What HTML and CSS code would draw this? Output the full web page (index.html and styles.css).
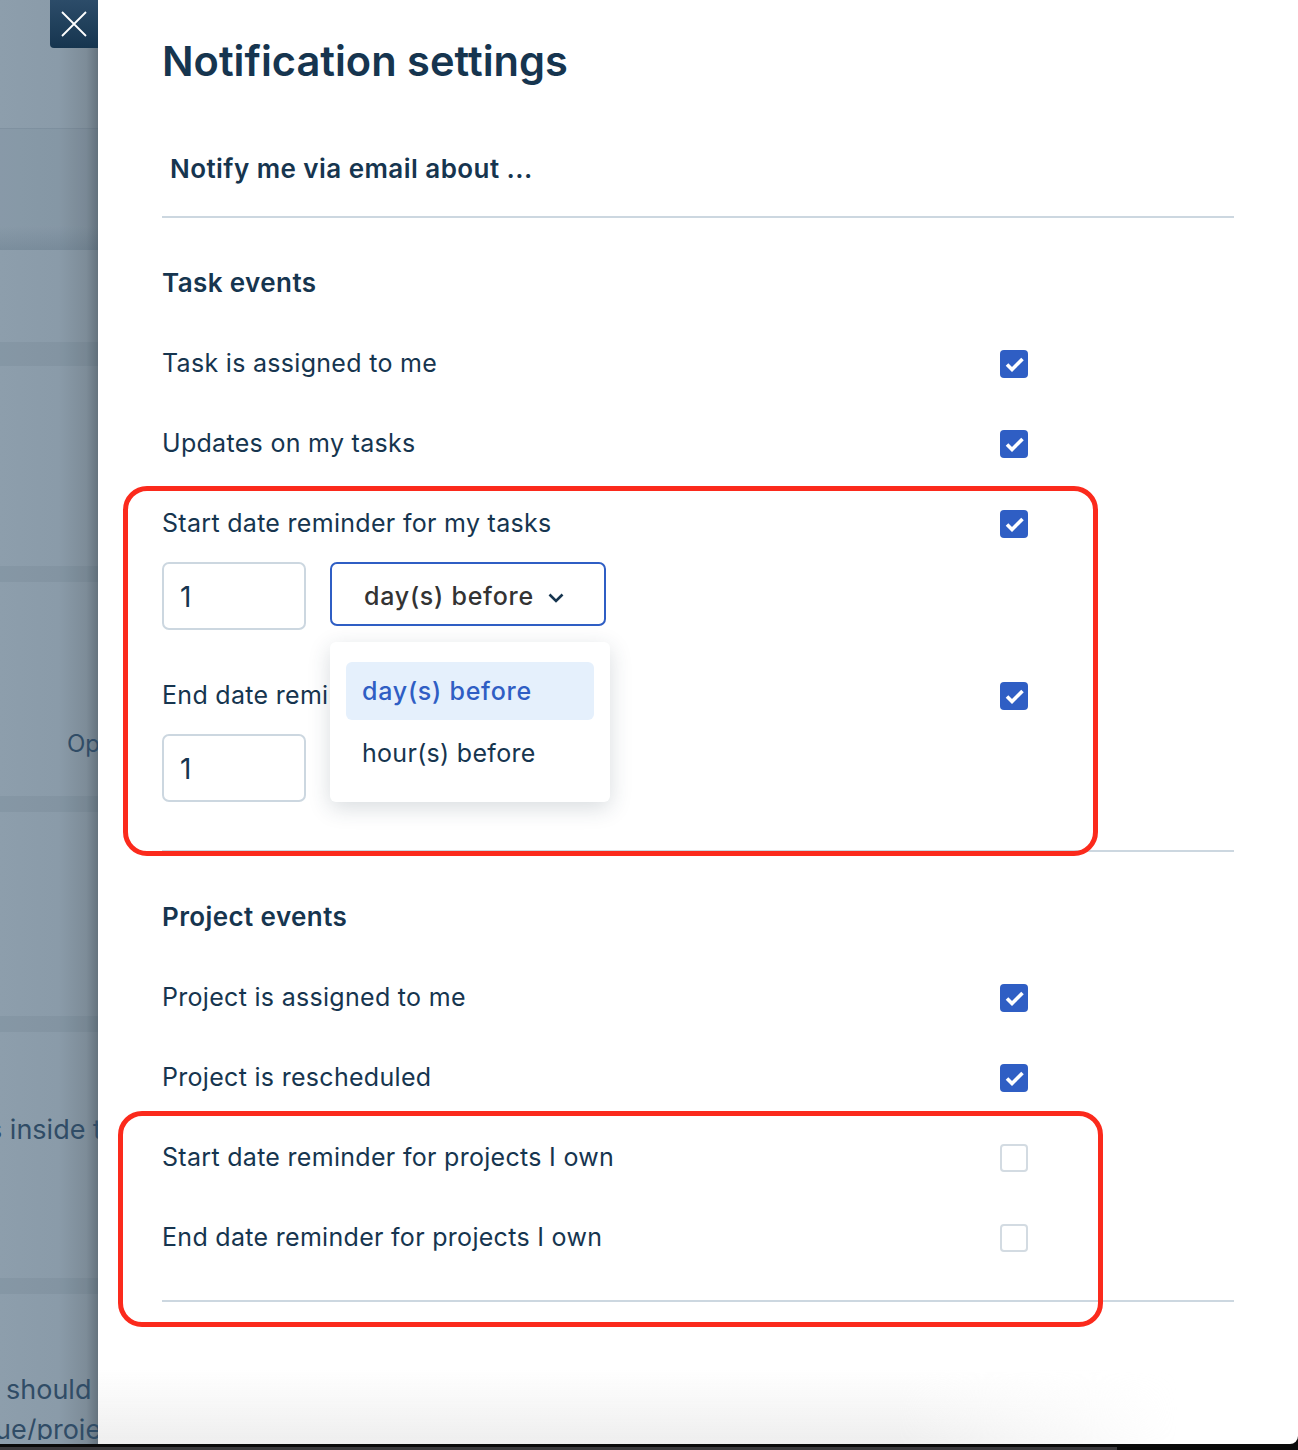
FILE: index.html
```html
<!DOCTYPE html>
<html lang="en">
<head>
<meta charset="utf-8">
<title>Notification settings</title>
<link rel="stylesheet" href="styles.css">
</head>
<body>
<div class="screen">
  <aside class="backdrop">
    <div class="bg-block h128"></div>
    <div class="bg-block h98 ruled"></div>
    <div class="band soft"></div>
    <div class="bg-block h92"></div>
    <div class="band wide"></div>
    <div class="bg-block h200"></div>
    <div class="band"></div>
    <div class="bg-block h214"><span class="bg-text op">Op</span></div>
    <div class="band"></div>
    <div class="bg-block h204"></div>
    <div class="band"></div>
    <div class="bg-block h246"><span class="bg-text inside">s inside the</span></div>
    <div class="band"></div>
    <div class="bg-block fill">
      <span class="bg-text should">should</span>
      <span class="bg-text proje">ue/project</span>
    </div>
  </aside>
  <main class="panel">
    <h1 class="title">Notification settings</h1>
    <div class="notify">Notify me via email about ...</div>
    <hr class="rule">
    <section class="group">
      <h2 class="group-title">Task events</h2>
      <div class="row"><span>Task is assigned to me</span><span class="check on"><svg viewBox="0 0 28 28"><path d="M7 14.5l5 5L22.5 9"/></svg></span></div>
      <div class="row"><span>Updates on my tasks</span><span class="check on"><svg viewBox="0 0 28 28"><path d="M7 14.5l5 5L22.5 9"/></svg></span></div>
      <div class="row"><span>Start date reminder for my tasks</span><span class="check on"><svg viewBox="0 0 28 28"><path d="M7 14.5l5 5L22.5 9"/></svg></span></div>
      <div class="controls">
        <div class="num">1</div>
        <div class="select-wrap">
          <div class="select">day(s) before<svg class="chev" viewBox="0 0 16 10"><path d="M1.5 1.5l6.5 6.5 6.5-6.5"/></svg></div>
          <div class="menu">
            <div class="opt active">day(s) before</div>
            <div class="opt">hour(s) before</div>
          </div>
        </div>
      </div>
      <div class="row after-controls"><span>End date reminder for my tasks</span><span class="check on"><svg viewBox="0 0 28 28"><path d="M7 14.5l5 5L22.5 9"/></svg></span></div>
      <div class="controls last"><div class="num">1</div></div>
    </section>
    <hr class="rule">
    <section class="group">
      <h2 class="group-title">Project events</h2>
      <div class="row"><span>Project is assigned to me</span><span class="check on"><svg viewBox="0 0 28 28"><path d="M7 14.5l5 5L22.5 9"/></svg></span></div>
      <div class="row"><span>Project is rescheduled</span><span class="check on"><svg viewBox="0 0 28 28"><path d="M7 14.5l5 5L22.5 9"/></svg></span></div>
      <div class="row"><span>Start date reminder for projects I own</span><span class="check"></span></div>
      <div class="row"><span>End date reminder for projects I own</span><span class="check"></span></div>
    </section>
    <hr class="rule tail">
    <div class="fade"></div>
  </main>
  <button class="close" type="button" aria-label="Close"><svg viewBox="0 0 26 26"><path d="M1 1l24 24M25 1L1 25"/></svg></button>
  <div class="mark mark-a"></div>
  <div class="mark mark-b"></div>
</div>
</body>
</html>
```
FILE: styles.css
```css
* { box-sizing: border-box; }
html, body { margin: 0; padding: 0; background: #0a0a0a; }
body { font-family: Inter, "Noto Sans", sans-serif; color: #16354f; }
.screen { position: relative; display: flex; width: 1298px; height: 1450px; overflow: hidden; background: linear-gradient(#3a393c, #3a393c) no-repeat 0 1447px / 1117px 3px, #0a0a0a; }

.backdrop { width: 98px; height: 1444px; flex: none; display: flex; flex-direction: column; overflow: hidden; background: linear-gradient(90deg, #8d9eac 0, #8a9ba9 60%, #7d8c98 88%, #65737e 100%); }
.bg-block { flex: none; display: flex; white-space: nowrap; }
.h128 { height: 128px; }
.h98 { height: 98px; border-top: 1px solid rgba(60,80,100,.1); background: rgba(50,75,95,.05); }
.h92 { height: 92px; }
.h200 { height: 200px; }
.h214 { height: 214px; }
.h204 { height: 204px; }
.h246 { height: 246px; }
.fill { height: 146px; flex-direction: column; overflow: hidden; }
.band { height: 16px; flex: none; background: rgba(50,75,95,.08); }
.band.wide { height: 24px; }
.band.soft { height: 24px; background: linear-gradient(rgba(50,75,95,.05), rgba(50,75,95,.2)); }
.bg-text { font-size: 27px; line-height: 40px; color: #304c66; }
.op { font-size: 24px; margin: 142px 0 0 67px; }
.inside { margin: 78px 0 0 -12px; }
.should { margin: 76px 0 0 6px; }
.proje { margin: 0 0 0 -5px; }

.panel { position: relative; flex: none; width: 1200px; height: 1444px; padding: 0 64px; background: #fff; border-radius: 0 0 8px 0; display: flex; flex-direction: column; overflow: hidden; }
.title { margin: 34px 0 0; font-size: 41.6px; line-height: 54px; font-weight: 600; color: #16354f; }
.notify { margin: 63px 0 0 8px; font-size: 26px; line-height: 36px; font-weight: 600; letter-spacing: .45px; }
.rule { height: 2px; border: 0; margin: 0; background: #ccd7e0; flex: none; }
.notify + .rule { margin-top: 29px; }
.group-title { margin: 47px 0 0; font-size: 26px; line-height: 36px; font-weight: 600; letter-spacing: .4px; }
.row { position: relative; display: flex; align-items: center; justify-content: space-between; height: 80px; font-size: 25px; padding-right: 206px; letter-spacing: .3px; }
.row > span:first-child { margin-top: -2px; }
.group-title + .row { margin-top: 23px; }
.check { width: 28px; height: 28px; border-radius: 4px; border: 2px solid #d3dbe2; background: #fff; display: block; flex: none; }
.check.on { background: #2f5ec4; border: 0; }
.check svg { display: block; width: 28px; height: 28px; }
.check path { fill: none; stroke: #fff; stroke-width: 3.6; }
.controls { display: flex; gap: 24px; margin-top: -2px; align-items: flex-start; height: 92px; }
.controls.last { height: 116px; margin-top: -2px; }
.num { width: 144px; height: 68px; border: 2px solid #ccd7e0; border-radius: 7px; padding-left: 16px; font-size: 28px; line-height: 66px; }
.select-wrap { position: relative; }
.select { width: 276px; height: 64px; border: 2px solid #2f5ec4; border-radius: 7px; padding: 3px 0 0 32px; font-size: 25px; font-weight: 500; line-height: 60px; color: #333; display: flex; align-items: center; gap: 14px; letter-spacing: .75px; }
.chev { width: 16px; height: 10px; margin-top: 5px; }
.chev path { fill: none; stroke: #16354f; stroke-width: 2.6; }
.menu { position: absolute; z-index: 2; top: 80px; left: 0; width: 280px; height: 160px; background: #fff; border-radius: 6px; padding: 20px 16px; box-shadow: 0 6px 22px rgba(40,60,80,.18); }
.opt { height: 58px; line-height: 58px; padding-left: 16px; border-radius: 6px; font-size: 25px; margin-bottom: 4px; letter-spacing: .3px; }
.opt.active { background: #e5f0fc; color: #2f5ec4; font-weight: 500; letter-spacing: .75px; }
.row.after-controls { margin-top: 2px; }
.tail { margin-top: 22px; }
.fade { position: absolute; left: 0; right: 0; bottom: 0; height: 74px; background: linear-gradient(rgba(238,238,238,0), #eee); -webkit-mask-image: linear-gradient(90deg, #000 800px, transparent 1080px); mask-image: linear-gradient(90deg, #000 800px, transparent 1080px); }

.close { position: absolute; left: 50px; top: 0; width: 48px; height: 48px; padding: 0; border: 0; border-radius: 0 0 0 4px; background: linear-gradient(#2c4c69, #16354f); display: flex; align-items: center; justify-content: center; }
.close svg { width: 26px; height: 26px; }
.close path { fill: none; stroke: #fff; stroke-width: 1.8; }
.mark { position: absolute; border: 5px solid #fb2a1c; z-index: 3; pointer-events: none; }
.mark-a { left: 123px; top: 486px; width: 975px; height: 370px; border-radius: 24px; }
.mark-b { left: 118px; top: 1111px; width: 985px; height: 216px; border-radius: 24px; }
```
